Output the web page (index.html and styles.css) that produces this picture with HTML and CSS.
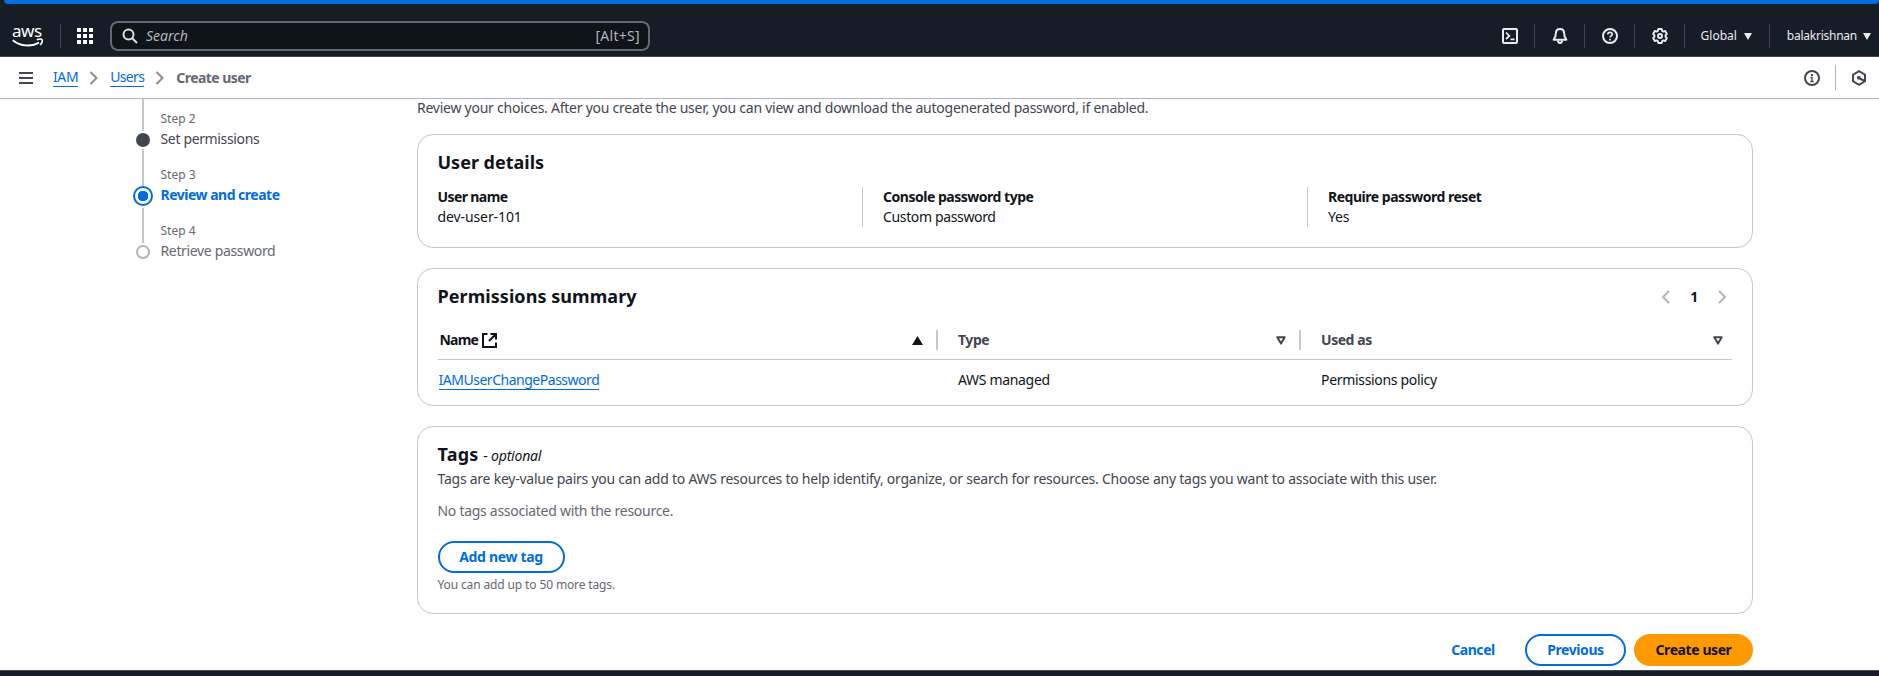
FILE: index.html
```html
<!DOCTYPE html>
<html lang="en">
<head>
<meta charset="utf-8">
<title>Create user | IAM</title>
<link rel="stylesheet" href="styles.css">
</head>
<body>
<div class="strip"><div class="strip-bar"></div></div>
<header class="topnav">
  <div class="logo">
    <span class="logo-text">aws</span>
    <svg class="logo-smile" width="32" height="9" viewBox="0 0 32 9" fill="none" stroke="#fff" stroke-width="1.800"><path d="M.8 2.200C8.500 8.600 19.500 9 27 4.400"/><path d="M24.800 1.700c2.300-.9 4.900-.8 5.300 0 .4 1-.3 3.600-1.900 5.300" stroke-width="1.500"/></svg>
  </div>
  <span class="vline logo-line"></span>
  <svg class="apps" width="16" height="16" viewBox="0 0 16 16" fill="#fff"><path d="M0 0h4v4H0zM6 0h4v4H6zM12 0h4v4h-4zM0 6h4v4H0zM6 6h4v4H6zM12 6h4v4h-4zM0 12h4v4H0zM6 12h4v4H6zM12 12h4v4h-4z"/></svg>
  <div class="search">
    <svg width="16" height="16" viewBox="0 0 16 16" fill="none" stroke="#dedee3" stroke-width="2"><circle cx="6.500" cy="6.500" r="5"/><path d="M10.200 10.200 15 15"/></svg>
    <span class="search-text">Search</span>
    <span class="search-key">[Alt+S]</span>
  </div>
  <div class="tools">
    <svg width="16" height="16" viewBox="0 0 16 16" fill="none" stroke="#ebebf0" stroke-width="2" stroke-linejoin="round"><rect x="1" y="1" width="14" height="14" rx="1"/><path d="M4 4.500 7.300 8 4 11.200M8.500 11.300h4" stroke-width="1.800" stroke-linejoin="miter"/></svg>
    <span class="vline"></span>
    <svg width="16" height="16" viewBox="0 0 16 16" fill="none" stroke="#ebebf0" stroke-width="2" stroke-linejoin="round"><path d="M8 1C5.300 1 3.900 3 3.900 5.300 3.900 8.500 3 9.800 1.600 11.800h12.800C13 9.800 12.100 8.500 12.100 5.300 12.100 3 10.700 1 8 1Z"/><path d="M6 12.500c0 3.300 4 3.300 4 0"/></svg>
    <span class="vline"></span>
    <svg width="16" height="16" viewBox="0 0 16 16" fill="none" stroke="#ebebf0" stroke-width="2"><circle cx="8" cy="8" r="7"/><path d="M5.800 6.600c0-3 4.500-2.900 4.500-.3 0 1.600-2.300 1.600-2.300 3.300M8 10.700v1.800" stroke-width="1.700"/></svg>
    <span class="vline"></span>
    <svg width="16" height="16" viewBox="0 0 16 16" fill="none" stroke="#ebebf0" stroke-width="1.900" stroke-linejoin="round"><path d="M6.300 1h3.400l.5 2 1 .6 2-.6 1.700 2.900L13.500 7.400v1.200l1.400 1.500-1.700 2.900-2-.6-1 .6-.5 2H6.300l-.5-2-1-.6-2 .6-1.700-2.900L2.500 8.600V7.400L1.100 5.900 2.800 3l2 .6 1-.6z"/><circle cx="8" cy="8" r="2"/></svg>
    <span class="vline"></span>
    <span class="menu menu-region">Global<svg width="8" height="7" viewBox="0 0 8 7" fill="#ebebf0"><path d="M0 0h8L4 7z"/></svg></span>
    <span class="vline"></span>
    <span class="menu menu-account">balakrishnan<svg width="8" height="7" viewBox="0 0 8 7" fill="#ebebf0"><path d="M0 0h8L4 7z"/></svg></span>
  </div>
</header>
<nav class="crumbs">
  <svg class="burger" width="14" height="12" viewBox="0 0 14 12" fill="#424650"><path d="M0 0h14v2H0zM0 5h14v2H0zM0 10h14v2H0z"/></svg>
  <a class="link crumb-iam">IAM</a>
  <svg class="chev" width="10" height="14" viewBox="0 0 10 14" fill="none" stroke="#8c8c94" stroke-width="2"><path d="m1.500 1 6 6-6 6"/></svg>
  <a class="link crumb-users">Users</a>
  <svg class="chev" width="10" height="14" viewBox="0 0 10 14" fill="none" stroke="#8c8c94" stroke-width="2"><path d="m1.500 1 6 6-6 6"/></svg>
  <span class="crumb-here">Create user</span>
  <div class="crumb-tools">
    <svg width="16" height="16" viewBox="0 0 16 16" fill="none" stroke="#424650" stroke-width="2"><circle cx="8" cy="8" r="7"/><path d="M6.500 7.500H8v4M6.300 11.500h3.400" stroke-width="1.300"/><path d="M8 4v2"/></svg>
    <span class="crumb-line"></span>
    <svg width="16" height="16" viewBox="0 0 16 16" fill="none" stroke="#424650" stroke-width="2"><path d="M8 1.200l6 3.500v6.600l-6 3.500-6-3.500V4.700z"/><path d="m8 8 5.500 3" stroke-width="2"/><circle cx="7.700" cy="7.800" r="1.200" fill="#424650" stroke-width="1.200"/></svg>
  </div>
</nav>
<main class="page">
  <ol class="steps">
    <li class="step step-done"><div class="rail"><i class="seg seg-top"></i><i class="dot dot-done"></i><i class="seg"></i></div><div class="step-body"><span class="step-no">Step 2</span><span class="step-name name-2">Set permissions</span></div></li>
    <li class="step"><div class="rail"><i class="seg seg-top"></i><i class="dot dot-now"></i><i class="seg"></i></div><div class="step-body"><span class="step-no">Step 3</span><span class="step-name name-3">Review and create</span></div></li>
    <li class="step"><div class="rail"><i class="seg seg-top"></i><i class="dot dot-next"></i></div><div class="step-body"><span class="step-no">Step 4</span><span class="step-name name-4">Retrieve password</span></div></li>
  </ol>
  <div class="content">
    <p class="intro">Review your choices. After you create the user, you can view and download the autogenerated password, if enabled.</p>
    <section class="card details">
      <h2 class="h-details">User details</h2>
      <dl class="cols">
        <div class="col"><dt class="t-user">User name</dt><dd class="v-user">dev-user-101</dd></div>
        <div class="col"><dt class="t-type">Console password type</dt><dd class="v-type">Custom password</dd></div>
        <div class="col"><dt class="t-reset">Require password reset</dt><dd>Yes</dd></div>
      </dl>
    </section>
    <section class="card perms">
      <div class="perms-head">
        <h2 class="h-perms">Permissions summary</h2>
        <div class="pager">
          <svg width="10" height="14" viewBox="0 0 10 14" fill="none" stroke="#b4b4bb" stroke-width="2"><path d="m8 1-6 6 6 6"/></svg>
          <b>1</b>
          <svg width="10" height="14" viewBox="0 0 10 14" fill="none" stroke="#b4b4bb" stroke-width="2"><path d="m2 1 6 6-6 6"/></svg>
        </div>
      </div>
      <div class="row row-head">
        <div class="th th-name"><span>Name</span><svg class="ext" width="15" height="15" viewBox="0 0 15 15" fill="none" stroke="#0f141a" stroke-width="2"><path d="M5.500 1H1v13h13V9.500M8.500 1H14v5.500M14 1 7 8"/></svg><svg class="sort" width="11" height="9" viewBox="0 0 11 9" fill="#0f141a"><path d="M5.500 0 11 9H0z"/></svg></div>
        <div class="th"><span>Type</span><svg class="sort" width="10" height="9" viewBox="0 0 10 9" fill="none" stroke="#424650" stroke-width="2" stroke-linejoin="round"><path d="M1.300 1.200h7.400L5 7.600z"/></svg></div>
        <div class="th th-last"><span>Used as</span><svg class="sort" width="10" height="9" viewBox="0 0 10 9" fill="none" stroke="#424650" stroke-width="2" stroke-linejoin="round"><path d="M1.300 1.200h7.400L5 7.600z"/></svg></div>
      </div>
      <div class="row row-data">
        <div class="td"><a class="link policy">IAMUserChangePassword</a></div>
        <div class="td td-type">AWS managed</div>
        <div class="td td-used">Permissions policy</div>
      </div>
    </section>
    <section class="card tags">
      <h2 class="h-tags">Tags <span class="optional">- <em>optional</em></span></h2>
      <p class="tags-desc">Tags are key-value pairs you can add to AWS resources to help identify, organize, or search for resources. Choose any tags you want to associate with this user.</p>
      <p class="tags-none">No tags associated with the resource.</p>
      <button class="btn btn-add">Add new tag</button>
      <p class="tags-hint">You can add up to 50 more tags.</p>
    </section>
    <div class="actions">
      <button class="btn btn-cancel">Cancel</button>
      <button class="btn btn-prev">Previous</button>
      <button class="btn btn-create">Create user</button>
    </div>
  </div>
</main>
<footer class="footer"></footer>
</body>
</html>
```
FILE: styles.css
```css
* { box-sizing: border-box; }
body {
  margin: 0;
  height: 676px;
  overflow: hidden;
  display: flex;
  flex-direction: column;
  background: #fff;
  color: #0f141a;
  font: 14px/20px "Noto Sans", "Open Sans", sans-serif;
  letter-spacing: -0.245px;
}
h2, p, dl, dd, ol { margin: 0; padding: 0; }
svg { display: block; flex: none; }
.strip { height: 4px; background: #161d26; flex: none; }
.strip-bar { height: 4px; margin: 0 0 0 4px; background: #006ce0; border-radius: 0 0 7px 7px; }
.topnav {
  height: 53px;
  flex: none;
  display: flex;
  align-items: center;
  padding: 12px 8px 0 12px;
  background: #161d26;
  border-bottom: 1px solid #424650;
}
.logo { width: 32px; height: 22px; display: flex; flex-direction: column; }
.logo-text { height: 14px; color: #fff; font-size: 17px; line-height: 11px; letter-spacing: -0.5px; }
.vline { width: 1px; height: 24px; background: #424650; }
.logo-line { margin-left: 16px; }
.apps { margin-left: 16px; }
.search {
  width: 540px;
  height: 30px;
  margin-left: 17px;
  display: flex;
  align-items: center;
  padding: 0 8px 0 10px;
  border: 2px solid #656871;
  border-radius: 8px;
  background: #0f141a;
  color: #b4b4bb;
}
.search-text { margin-left: 8px; font-style: italic; letter-spacing: 0; }
.search-key { margin-left: auto; letter-spacing: 0.3px; }
.tools { margin-left: auto; display: flex; align-items: center; gap: 16.500px; }
.menu { display: flex; align-items: center; gap: 7px; color: #ebebf0; font-size: 12px; letter-spacing: 0; }
.menu-region { margin-left: -1px; margin-right: 1px; }
.menu-account { gap: 6px; letter-spacing: -0.25px; }
.crumbs {
  height: 42px;
  flex: none;
  display: flex;
  align-items: center;
  padding: 0 12px 0 19px;
  border-bottom: 1px solid #b4b4bb;
}
.link { color: #006ce0; border-bottom: 1px solid #006ce0; line-height: 18px; }
.burger { margin-right: 20px; }
.crumb-iam { letter-spacing: -0.4px; }
.crumb-users { letter-spacing: -0.65px; }
.chev { margin: 0 11px; }
.crumb-here { color: #656871; font-weight: 700; letter-spacing: -0.55px; }
.crumb-tools { margin-left: auto; display: flex; align-items: center; }
.crumb-line { width: 1px; height: 25px; background: #b4b4bb; margin: 0 15px; }
.page { height: 571px; flex: none; display: flex; }
.steps { width: 417px; padding-left: 133px; list-style: none; }
.step { display: flex; height: 56px; }
.rail { width: 20px; display: flex; flex-direction: column; align-items: center; }
.seg { width: 2px; flex: 1; background: #c6c6cd; }
.seg-top { flex: 0 0 32px; }
.dot { flex: none; width: 14px; height: 14px; border-radius: 50%; margin: 2px 0; }
.dot-done { background: #424650; }
.dot-now { width: 20px; height: 20px; margin: -1px 0 2px; border: 2px solid #006ce0; background: radial-gradient(circle, #006ce0 5px, #fff 5.500px); }
.dot-next { border: 2px solid #b4b4bb; }
.step-body { display: flex; flex-direction: column; padding: 10px 0 0 7.500px; }
.step-no { font-size: 12px; line-height: 20px; color: #656871; letter-spacing: 0; }
.step-name { line-height: 20px; color: #656871; letter-spacing: -0.35px; }
.name-2 { color: #424650; }
.name-3 { color: #006ce0; font-weight: 700; letter-spacing: -0.5px; }
.content { width: 1336px; display: flex; flex-direction: column; }
.intro { height: 36px; margin-top: -1px; color: #424650; }
.card { border: 1px solid #c6c6cd; border-radius: 16px; padding: 0 20px 0 19.500px; margin-bottom: 20px; flex: none; }
h2 { font-size: 18px; line-height: 22px; font-weight: 700; letter-spacing: 0; }
.h-perms { letter-spacing: 0.06px; }
.details { height: 114px; padding-top: 16px; }
.cols { display: grid; grid-template-columns: 424.500px 445px 1fr; margin-top: 14px; }
.col { height: 40px; }
.col + .col { border-left: 1px solid #c6c6cd; padding-left: 20px; }
dt { font-weight: 700; letter-spacing: -0.48px; }
.t-user { letter-spacing: -0.6px; }
.v-user { letter-spacing: -0.1px; }
.v-type { letter-spacing: -0.36px; }
.perms { height: 138px; padding-top: 16px; }
.perms-head { display: flex; justify-content: space-between; }
.pager { display: flex; align-items: center; gap: 19px; padding: 2px 5px 0 0; height: 22px; }
.row { display: grid; grid-template-columns: 500.500px 363px 1fr; }
.row-head { margin-top: 23px; height: 30px; border-bottom: 1px solid #c6c6cd; }
.th { display: flex; align-items: center; height: 20px; font-weight: 700; color: #424650; letter-spacing: -0.45px; border-right: 2px solid #c6c6cd; padding: 0 13px 0 20px; }
.th-name { color: #0f141a; padding-left: 2px; letter-spacing: -0.8px; }
.th-last { border-right: 0; padding-right: 9px; }
.ext { margin-left: 4px; }
.sort { margin-left: auto; }
.row-data { padding-top: 10px; }
.td { padding-left: 20px; letter-spacing: -0.32px; }
.td:first-child { padding-left: 1px; }
.policy { letter-spacing: -0.48px; }
.tags { height: 188px; padding-top: 16px; }
.optional { font-size: 14px; font-weight: 400; letter-spacing: -0.2px; }
.h-tags { letter-spacing: 0.2px; }
.tags-desc { margin-top: 2px; color: #424650; }
.tags-none { margin-top: 12px; color: #656871; letter-spacing: -0.28px; }
.tags-hint { margin-top: 2px; font-size: 12px; color: #656871; letter-spacing: -0.13px; }
.btn { height: 32px; padding: 0; border: 2px solid #006ce0; border-radius: 20px; background: #fff; color: #006ce0; font: 700 14px/20px "Noto Sans", "Open Sans", sans-serif; letter-spacing: -0.42px; }
.btn-add { display: block; width: 127px; margin-top: 20px; letter-spacing: -0.33px; }
.actions { display: flex; justify-content: flex-end; }
.btn-cancel { width: 82px; border-color: transparent; margin-right: 11px; }
.btn-prev { width: 101px; margin-right: 8px; }
.btn-create { width: 119px; border-color: #ff9900; background: #ff9900; color: #0f141a; }
.footer { flex: 1; background: #161d26; border-top: 1px solid #424650; }
```
